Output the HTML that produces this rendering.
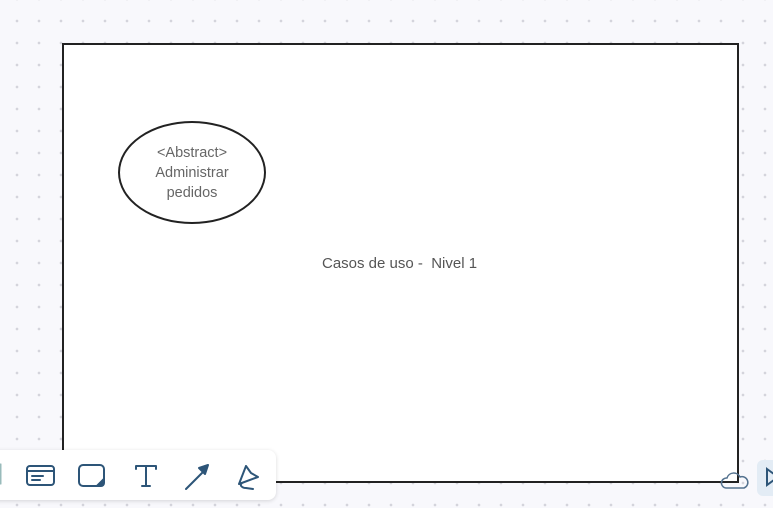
<!DOCTYPE html>
<html><head><meta charset="utf-8"><style>
html,body{margin:0;padding:0;}
body{width:773px;height:508px;overflow:hidden;position:relative;background:#f8f8fc;
background-image:radial-gradient(circle,#d4d4dc 1.1px,transparent 1.6px);background-size:22px 22px;background-position:6px 10px;
font-family:"Liberation Sans",sans-serif;}
.frame{position:absolute;left:62px;top:43px;width:673px;height:436px;border:2px solid #222;background:#fff;}
.ell{position:absolute;left:118px;top:121px;width:144px;height:99px;border:2px solid #222;border-radius:50%;}
.etxt{position:absolute;left:118px;top:143px;width:148px;text-align:center;color:#666;font-size:14.5px;line-height:20px;}
.lbl{position:absolute;left:322px;top:255px;color:#555;font-size:15px;white-space:pre;}
.tb{position:absolute;left:-10px;top:450px;width:286px;height:50px;background:#fff;border-radius:8px;box-shadow:0 1px 4px rgba(0,0,0,.15);}
svg{position:absolute;}
.btn{position:absolute;left:757px;top:460px;width:30px;height:36px;background:#e3ecf5;border-radius:6px;}
</style></head><body>
<div class="frame"></div>
<div class="ell"></div>
<div class="etxt">&lt;Abstract&gt;<br>Administrar<br>pedidos</div>
<div class="lbl">Casos de uso -  Nivel 1</div>
<div class="tb"></div>
<svg width="290" height="60" style="left:0;top:448px" fill="none" stroke="#2d5578" stroke-width="2" stroke-linecap="round" stroke-linejoin="round">
<rect x="0" y="16" width="1" height="20" stroke="#9bb" stroke-width="1"/>
<rect x="27" y="18" width="27" height="19" rx="3"/>
<line x1="28" y1="23" x2="53" y2="23"/>
<line x1="32" y1="28" x2="43" y2="28"/>
<line x1="32" y1="32" x2="40" y2="32"/>
<path d="M83 17h17a4 4 0 0 1 4 4v10l-7 7H83a4 4 0 0 1-4-4V21a4 4 0 0 1 4-4z"/>
<path d="M97 38l7-7v4a3 3 0 0 1-3 3z" fill="#2d5578"/>
<path d="M136 18h20M146 18v20M142 38h8M136 18v3M156 18v3"/>
<path d="M186 41L206 21"/>
<path d="M199 20l9-3-3 9z" fill="#2d5578"/>
<path d="M246 18l-7 18M246 18l5 7 7 4-19 7M242 35c-3 2 0 5 4 5l7 1"/>
</svg>
<svg width="30" height="22" style="left:720px;top:470px" fill="none" stroke="#54728f" stroke-width="1.5">
<path d="M6 18a5 5 0 0 1 1-10 7 7 0 0 1 13-1 5 5 0 0 1 4 11z"/>
</svg>
<div class="btn"></div>
<svg width="16" height="20" style="left:765px;top:467px" fill="none" stroke="#2d5578" stroke-width="2"><path d="M2 2l11 8-11 8z"/></svg>
</body></html>
